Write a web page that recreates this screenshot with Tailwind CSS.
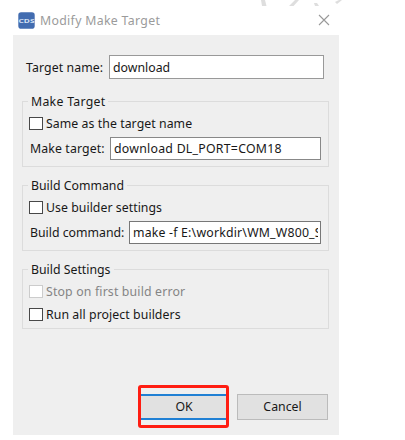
<!DOCTYPE html>
<html lang="en">
<head>
<meta charset="utf-8">
<title>Modify Make Target</title>
<script src="https://cdn.jsdelivr.net/npm/@tailwindcss/browser@4"></script>
</head>
<body class="w-[405px] h-[440px] overflow-hidden bg-white font-['Noto_Sans','Open_Sans',sans-serif] text-[12.3px] leading-[18px] text-[#181818] whitespace-nowrap">
<svg class="absolute left-[255px] top-0" width="95" height="6" fill="#dedede"><path d="M6 0H10L11.500 6H7Z M40 0H44L38.500 6H34Z M59 3L62 3L64 6H60Z M84 0H87L82 4L80 2Z"/></svg>
<main class="ml-[13px] w-[326px]">
  <header class="flex h-[35px] items-center pt-[5px] pl-[5px] pr-[9px]">
    <svg class="shrink-0" width="17" height="17" viewBox="0 0 17 17"><rect x=".3" y=".3" width="16.4" height="16.4" rx="2.8" fill="#426cb0"/><text x="8.5" y="10.5" text-anchor="middle" textLength="16" lengthAdjust="spacingAndGlyphs" font-size="6" font-weight="700" fill="#d3e0f4">CDS</text></svg>
    <h1 class="ml-[5px] pt-px text-[#9b9b9b] tracking-[0.32px]">Modify Make Target</h1>
    <svg class="ml-auto" width="12" height="12" stroke="#999" stroke-width="1.1"><path d="M1 1L11 11M11 1L1 11"/></svg>
  </header>
  <section class="h-[400px] bg-[#efefef] pt-[20px] px-[9px]">
    <div class="flex h-[24px] items-center pl-[4px] pr-[4px]">
      <label class="w-[83px] pt-[2px] tracking-[0.1px]">Target name:</label>
      <div class="flex h-[24px] w-[215px] items-center border border-[#999] bg-white pl-[3px] pt-[2px]">download</div>
    </div>
    <fieldset class="mt-[12px] h-[76px] w-[307px] border border-[#dcdcdc] pl-[6px]">
      <legend class="px-[3px] -ml-px pt-[2px] tracking-[0.28px]">Make Target</legend>
      <div class="flex h-[25px] items-center"><i class="mr-[3px] h-[13px] w-[14px] border border-[#484848] bg-white"></i><span class="pt-px tracking-[0.06px]">Same as the target name</span></div>
      <div class="mt-px flex h-[23px] items-center pl-px"><label class="w-[80px] pt-px tracking-[0.12px]">Make target:</label><div class="flex h-[23px] w-[211px] items-center border border-[#888] bg-white pl-[3px] pt-px tracking-[0.26px]">download DL_PORT=COM18</div></div>
    </fieldset>
    <fieldset class="mt-[8px] h-[76px] w-[307px] border border-[#dcdcdc] pl-[6px]">
      <legend class="px-[3px] -ml-px pt-[2px]">Build Command</legend>
      <div class="flex h-[25px] items-center"><i class="mr-[3px] h-[13px] w-[14px] border border-[#484848] bg-white"></i><span class="pt-px tracking-[0.04px]">Use builder settings</span></div>
      <div class="mt-px flex h-[23px] items-center pl-px"><label class="w-[99px] pt-px">Build command:</label><div class="flex h-[23px] w-[192px] items-center border border-[#777] bg-white pl-[3px] pt-px"><span class="w-[185px] overflow-hidden tracking-[0.2px]">make -f E:\workdir\WM_W800_S</span></div></div>
    </fieldset>
    <fieldset class="mt-[8px] h-[70px] w-[307px] border border-[#dcdcdc] pl-[6px]">
      <legend class="px-[3px] -ml-px pt-[2px]">Build Settings</legend>
      <div class="flex h-[25px] items-center text-[#858585]"><i class="mr-[3px] h-[13px] w-[14px] border border-[#ccc] bg-white"></i><span class="pt-px tracking-[0.16px]">Stop on first build error</span></div>
      <div class="flex h-[20px] items-center"><i class="mr-[3px] h-[13px] w-[14px] border border-[#484848] bg-white"></i><span class="pt-px tracking-[0.07px]">Run all project builders</span></div>
    </fieldset>
    <footer class="mt-[56px] flex items-center justify-end gap-[8px] pr-[2px]">
      <div class="flex h-[43px] w-[91px] items-center rounded-[3px] border-[3px] border-[#ff1d12]"><button class="h-[26px] w-full border-y-2 border-[#2080d4] bg-[#e1e1e1] pl-px">OK</button></div>
      <button class="h-[26px] w-[91px] border border-[#bbb] bg-[#e1e1e1]">Cancel</button>
    </footer>
  </section>
</main>
</body>
</html>
